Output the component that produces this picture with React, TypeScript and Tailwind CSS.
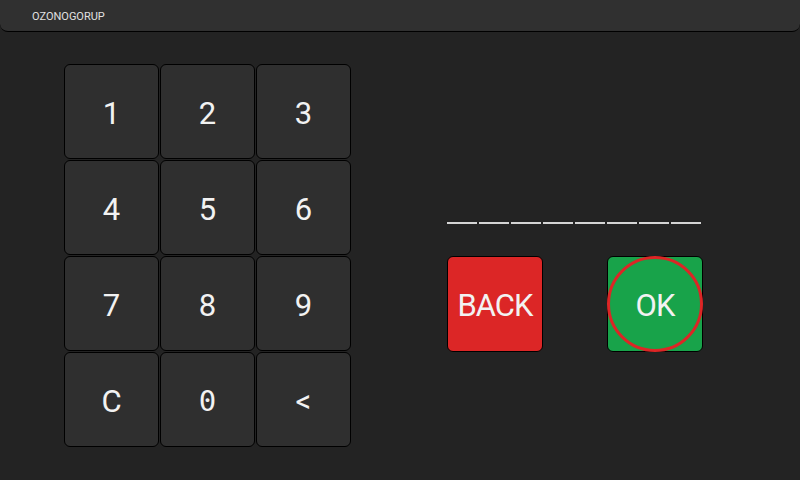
const keys = ['1', '2', '3', '4', '5', '6', '7', '8', '9', 'C', '0', '<']

export default function App() {
  return (
    <div className="h-[480px] w-[800px] overflow-hidden bg-[#232323] font-['Roboto',sans-serif] text-[#f2f2f2]">
      <header className="flex h-[32px] items-center rounded-b-[8px] border-b border-black bg-[#303030] pl-[32px] pt-[3px]">
        <span className="text-[11px] text-[#e0e0e0]">OZONOGORUP</span>
      </header>

      <div className="flex pl-[64px] pt-[32px]">
        <div className="grid grid-cols-[repeat(3,95px)] gap-px">
          {keys.map((k) => (
            <button
              key={k}
              type="button"
              className={`flex h-[95px] w-[95px] items-center justify-center rounded-[6px] border border-black bg-[#2f2f2f] pt-[5px] ${
                k === '0' ? "font-['DejaVu_Sans_Mono',monospace] text-[29px]" : 'text-[31px]'
              }`}
            >
              {k}
            </button>
          ))}
        </div>

        <div className="ml-[96px] flex flex-col pt-[158px]">
          <div className="flex gap-[2px]">
            {Array.from({ length: 8 }).map((_, i) => (
              <div key={i} className="h-[2px] w-[30px] bg-[#d4d4d4]" />
            ))}
          </div>
          <div className="mt-[32px] flex gap-[64px]">
            <button
              type="button"
              className="flex h-[96px] w-[96px] items-center justify-center rounded-[6px] border border-black bg-[#dc2626] pt-[4px] text-[31px] tracking-[-1px]"
            >
              BACK
            </button>
            <button
              type="button"
              className="relative flex h-[96px] w-[96px] items-center justify-center rounded-[6px] border border-black bg-[#18a34a] pt-[4px] text-[31px] tracking-[-1px]"
            >
              OK
              <span className="absolute inset-[-1px] rounded-full border-[3px] border-[#dc2626]" />
            </button>
          </div>
        </div>
      </div>
    </div>
  )
}
